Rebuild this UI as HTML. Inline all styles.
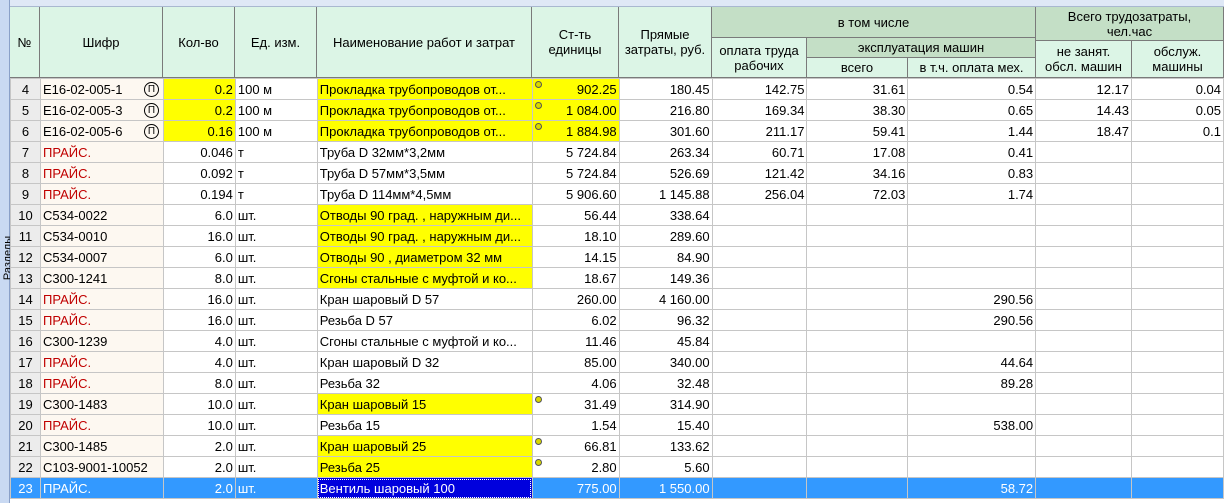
<!DOCTYPE html><html><head><meta charset="utf-8"><style>
body{margin:0;width:1224px;height:503px;overflow:hidden;background:#fff;font-family:"Liberation Sans",sans-serif;font-size:13px;position:relative}
.strip{position:absolute;left:0;top:0;width:9px;height:503px;background:#c9d9f2;border-right:1px solid #8aa0c8}
.top{position:absolute;left:10px;top:0;width:1214px;height:6px;background:#dfe8f6;border-bottom:1px solid #a9b8d0}
.h{position:absolute;box-sizing:border-box;border-right:1px solid #7a7a7a;border-bottom:1px solid #7a7a7a;background:#dcf5e6;display:flex;align-items:center;justify-content:center;text-align:center;line-height:15px;color:#000}
.g{background:#c4dfc6}
table{position:absolute;left:10px;top:78px;border-collapse:collapse;table-layout:fixed}
tr{height:21px}
td{height:21px;padding:0 2px;border:1px solid #c6c6c6;white-space:nowrap;overflow:hidden;box-sizing:border-box;position:relative}
td.n{background:#ececec;text-align:center}
td.c{background:#fdf8f1}
.r{text-align:right}
.red{color:#c00000}
.y{background:#ffff00!important}
.dot::before{content:"";position:absolute;left:2px;top:2px;width:5px;height:5px;border-radius:50%;background:#d8d800;border:1px solid #555}
.pi{position:absolute;right:4px;top:3px;width:13px;height:13px;border:1px solid #000;border-radius:50%;font-size:10px;line-height:13px;text-align:center}
tr.sel td{background:#3399ff!important;color:#fff}
tr.sel td.nm{background:#0000dd!important;outline:1px dotted #fff;outline-offset:-2px}
.vt{position:absolute;left:-14px;top:252px;transform:rotate(-90deg);font-size:11px;color:#000}
</style></head><body>
<div class="strip"><div class="vt">Разделы</div></div>
<div class="top"></div>
<div class="h" style="left:10px;top:7px;width:30px;height:71px">№</div>
<div class="h" style="left:40px;top:7px;width:123px;height:71px">Шифр</div>
<div class="h" style="left:163px;top:7px;width:72px;height:71px">Кол-во</div>
<div class="h" style="left:235px;top:7px;width:82px;height:71px">Ед. изм.</div>
<div class="h" style="left:317px;top:7px;width:215px;height:71px">Наименование работ и затрат</div>
<div class="h" style="left:532px;top:7px;width:87px;height:71px">Ст-ть<br>единицы</div>
<div class="h" style="left:619px;top:7px;width:93px;height:71px">Прямые<br>затраты, руб.</div>
<div class="h g" style="left:712px;top:7px;width:324px;height:31px">в том числе</div>
<div class="h g" style="left:1036px;top:7px;width:188px;height:34px">Всего трудозатраты,<br>чел.час</div>
<div class="h" style="left:712px;top:38px;width:95px;height:40px">оплата труда<br>рабочих</div>
<div class="h g" style="left:807px;top:38px;width:229px;height:20px">эксплуатация машин</div>
<div class="h" style="left:807px;top:58px;width:101px;height:20px">всего</div>
<div class="h" style="left:908px;top:58px;width:128px;height:20px">в т.ч. оплата мех.</div>
<div class="h" style="left:1036px;top:41px;width:96px;height:37px">не занят.<br>обсл. машин</div>
<div class="h" style="left:1132px;top:41px;width:92px;height:37px">обслуж.<br>машины</div>
<table>
<colgroup><col style="width:30px"><col style="width:123px"><col style="width:72px"><col style="width:82px"><col style="width:215px"><col style="width:87px"><col style="width:93px"><col style="width:95px"><col style="width:101px"><col style="width:128px"><col style="width:96px"><col style="width:92px"></colgroup>
<tr><td class="n">4</td><td class="c">E16-02-005-1<span class="pi">П</span></td><td class="r y">0.2</td><td>100 м</td><td class="y">Прокладка трубопроводов от...</td><td class="r y dot">902.25</td><td class="r">180.45</td><td class="r">142.75</td><td class="r">31.61</td><td class="r">0.54</td><td class="r">12.17</td><td class="r">0.04</td></tr>
<tr><td class="n">5</td><td class="c">E16-02-005-3<span class="pi">П</span></td><td class="r y">0.2</td><td>100 м</td><td class="y">Прокладка трубопроводов от...</td><td class="r y dot">1 084.00</td><td class="r">216.80</td><td class="r">169.34</td><td class="r">38.30</td><td class="r">0.65</td><td class="r">14.43</td><td class="r">0.05</td></tr>
<tr><td class="n">6</td><td class="c">E16-02-005-6<span class="pi">П</span></td><td class="r y">0.16</td><td>100 м</td><td class="y">Прокладка трубопроводов от...</td><td class="r y dot">1 884.98</td><td class="r">301.60</td><td class="r">211.17</td><td class="r">59.41</td><td class="r">1.44</td><td class="r">18.47</td><td class="r">0.1</td></tr>
<tr><td class="n">7</td><td class="c red">ПРАЙС.</td><td class="r">0.046</td><td>т</td><td>Труба D 32мм*3,2мм</td><td class="r">5 724.84</td><td class="r">263.34</td><td class="r">60.71</td><td class="r">17.08</td><td class="r">0.41</td><td></td><td></td></tr>
<tr><td class="n">8</td><td class="c red">ПРАЙС.</td><td class="r">0.092</td><td>т</td><td>Труба D 57мм*3,5мм</td><td class="r">5 724.84</td><td class="r">526.69</td><td class="r">121.42</td><td class="r">34.16</td><td class="r">0.83</td><td></td><td></td></tr>
<tr><td class="n">9</td><td class="c red">ПРАЙС.</td><td class="r">0.194</td><td>т</td><td>Труба D 114мм*4,5мм</td><td class="r">5 906.60</td><td class="r">1 145.88</td><td class="r">256.04</td><td class="r">72.03</td><td class="r">1.74</td><td></td><td></td></tr>
<tr><td class="n">10</td><td class="c">C534-0022</td><td class="r">6.0</td><td>шт.</td><td class="y">Отводы 90 град. , наружным ди...</td><td class="r">56.44</td><td class="r">338.64</td><td></td><td></td><td></td><td></td><td></td></tr>
<tr><td class="n">11</td><td class="c">C534-0010</td><td class="r">16.0</td><td>шт.</td><td class="y">Отводы 90 град. , наружным ди...</td><td class="r">18.10</td><td class="r">289.60</td><td></td><td></td><td></td><td></td><td></td></tr>
<tr><td class="n">12</td><td class="c">C534-0007</td><td class="r">6.0</td><td>шт.</td><td class="y">Отводы 90 , диаметром 32 мм</td><td class="r">14.15</td><td class="r">84.90</td><td></td><td></td><td></td><td></td><td></td></tr>
<tr><td class="n">13</td><td class="c">C300-1241</td><td class="r">8.0</td><td>шт.</td><td class="y">Сгоны стальные с муфтой и ко...</td><td class="r">18.67</td><td class="r">149.36</td><td></td><td></td><td></td><td></td><td></td></tr>
<tr><td class="n">14</td><td class="c red">ПРАЙС.</td><td class="r">16.0</td><td>шт.</td><td>Кран шаровый D 57</td><td class="r">260.00</td><td class="r">4 160.00</td><td></td><td></td><td class="r">290.56</td><td></td><td></td></tr>
<tr><td class="n">15</td><td class="c red">ПРАЙС.</td><td class="r">16.0</td><td>шт.</td><td>Резьба D 57</td><td class="r">6.02</td><td class="r">96.32</td><td></td><td></td><td class="r">290.56</td><td></td><td></td></tr>
<tr><td class="n">16</td><td class="c">C300-1239</td><td class="r">4.0</td><td>шт.</td><td>Сгоны стальные с муфтой и ко...</td><td class="r">11.46</td><td class="r">45.84</td><td></td><td></td><td></td><td></td><td></td></tr>
<tr><td class="n">17</td><td class="c red">ПРАЙС.</td><td class="r">4.0</td><td>шт.</td><td>Кран шаровый D 32</td><td class="r">85.00</td><td class="r">340.00</td><td></td><td></td><td class="r">44.64</td><td></td><td></td></tr>
<tr><td class="n">18</td><td class="c red">ПРАЙС.</td><td class="r">8.0</td><td>шт.</td><td>Резьба 32</td><td class="r">4.06</td><td class="r">32.48</td><td></td><td></td><td class="r">89.28</td><td></td><td></td></tr>
<tr><td class="n">19</td><td class="c">C300-1483</td><td class="r">10.0</td><td>шт.</td><td class="y">Кран шаровый 15</td><td class="r dot">31.49</td><td class="r">314.90</td><td></td><td></td><td></td><td></td><td></td></tr>
<tr><td class="n">20</td><td class="c red">ПРАЙС.</td><td class="r">10.0</td><td>шт.</td><td>Резьба 15</td><td class="r">1.54</td><td class="r">15.40</td><td></td><td></td><td class="r">538.00</td><td></td><td></td></tr>
<tr><td class="n">21</td><td class="c">C300-1485</td><td class="r">2.0</td><td>шт.</td><td class="y">Кран шаровый 25</td><td class="r dot">66.81</td><td class="r">133.62</td><td></td><td></td><td></td><td></td><td></td></tr>
<tr><td class="n">22</td><td class="c">C103-9001-10052</td><td class="r">2.0</td><td>шт.</td><td class="y">Резьба 25</td><td class="r dot">2.80</td><td class="r">5.60</td><td></td><td></td><td></td><td></td><td></td></tr>
<tr class="sel"><td class="n">23</td><td class="c">ПРАЙС.</td><td class="r">2.0</td><td>шт.</td><td class="nm">Вентиль шаровый 100</td><td class="r">775.00</td><td class="r">1 550.00</td><td></td><td></td><td class="r">58.72</td><td></td><td></td></tr>
</table>
</body></html>
